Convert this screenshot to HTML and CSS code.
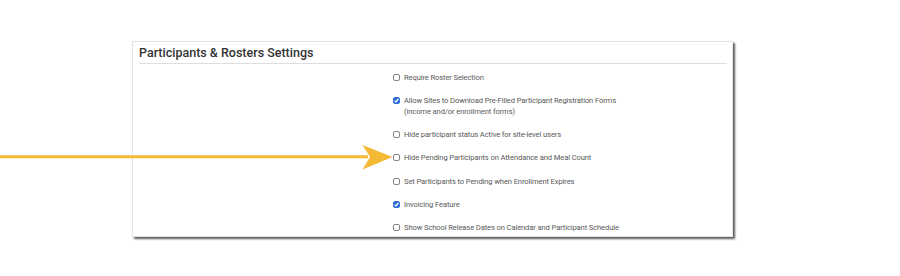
FILE: index.html
```html
<!DOCTYPE html>
<html lang="en">
<head>
    <meta charset="UTF-8">
    <meta name="viewport" content="width=device-width, initial-scale=1.0">
    <title>Participants &amp; Rosters Settings</title>
    <link rel="stylesheet" href="styles.css">
</head>
<body>
    <div class="panel">
        <h2 class="panel-title">Participants &amp; Rosters Settings</h2>
        <div class="panel-body">
            <div class="label-col"></div>
            <ul class="options">
                <li><span class="box"></span><span>Require Roster Selection</span></li>
                <li><span class="box checked"><svg viewBox="0 0 8 8"><path d="M1.8 4.2 L3.3 5.6 L6.2 2.3" /></svg></span><span>Allow Sites to Download Pre-Filled Participant Registration Forms<br>(income and/or enrollment forms)</span></li>
                <li><span class="box"></span><span>Hide participant status Active for site-level users</span></li>
                <li><span class="box"></span><span>Hide Pending Participants on Attendance and Meal Count</span></li>
                <li><span class="box"></span><span>Set Participants to Pending when Enrollment Expires</span></li>
                <li><span class="box checked"><svg viewBox="0 0 8 8"><path d="M1.8 4.2 L3.3 5.6 L6.2 2.3" /></svg></span><span>Invoicing Feature</span></li>
                <li><span class="box"></span><span>Show School Release Dates on Calendar and Participant Schedule</span></li>
            </ul>
        </div>
    </div>

    <svg class="pointer" width="394" height="26" viewBox="0 0 394 26">
        <line x1="0" y1="12.8" x2="368" y2="12.8" />
        <polygon points="362.5,1 392.5,13 362.5,25.5 370,13" />
    </svg>
</body>
</html>
```

FILE: styles.css
```css
body {
    margin: 0;
    background: #fff;
    font-family: Roboto, "Liberation Sans", sans-serif;
    position: relative;
    height: 276px;
    overflow: hidden;
}
.panel {
    margin: 41px 0 0 132px;
    width: 601px;
    box-sizing: border-box;
    border: 1px solid #e4e4e4;
    background: #fff;
    box-shadow: 2px 2px 2px rgba(0, 0, 0, 0.65);
}
.panel-title {
    margin: 0 5px 0 6px;
    padding: 3px 0 3px;
    font-size: 12.5px;
    line-height: 15px;
    font-weight: 500;
    color: #333;
    border-bottom: 1px solid #dedede;
}
.panel-body {
    display: grid;
    grid-template-columns: 260px 1fr;
    padding: 7.5px 0 3px;
}
.options {
    list-style: none;
    margin: 0;
    padding: 0;
    display: flex;
    flex-direction: column;
    gap: 12.3px;
}
.options li {
    display: flex;
    align-items: flex-start;
    font-size: 7.6px;
    letter-spacing: -0.12px;
    line-height: 11px;
    color: #5a5a5a;
}
.box {
    flex: none;
    width: 7px;
    height: 7px;
    margin: 2px 4px 0 0;
    box-sizing: border-box;
    border: 1px solid #858585;
    border-radius: 2px;
    background: #fff;
    display: flex;
}
.box.checked {
    background: #2f6fd3;
    border-color: #2f6fd3;
}
.box svg {
    margin: -1px;
    width: 7px;
    height: 7px;
}
.box svg path {
    fill: none;
    stroke: #fff;
    stroke-width: 1.4;
}
.pointer {
    position: absolute;
    left: 0;
    top: 144px;
}
.pointer line {
    stroke: #f5b935;
    stroke-width: 3;
}
.pointer polygon {
    fill: #f5b935;
}
```
